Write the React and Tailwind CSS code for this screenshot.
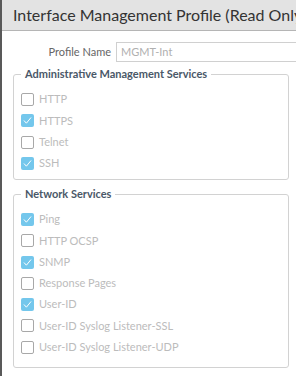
import React from 'react';

const adminServices = [
  { label: 'HTTP', checked: false },
  { label: 'HTTPS', checked: true },
  { label: 'Telnet', checked: false },
  { label: 'SSH', checked: true },
];

const networkServices = [
  { label: 'Ping', checked: true },
  { label: 'HTTP OCSP', checked: false },
  { label: 'SNMP', checked: true },
  { label: 'Response Pages', checked: false },
  { label: 'User-ID', checked: true },
  { label: 'User-ID Syslog Listener-SSL', checked: false },
  { label: 'User-ID Syslog Listener-UDP', checked: false },
];

function CheckRow({ label, checked }) {
  return (
    <div className="flex items-center h-[21.25px]">
      {checked ? (
        <span className="flex items-center justify-center w-[13px] h-[13px] rounded-[2px] bg-[#74c7ec]">
          <svg width="13" height="13" viewBox="0 0 13 13" fill="none">
            <path d="M3.2 6.8L5.4 9.2L9.8 3.8" stroke="white" strokeWidth="1" strokeLinecap="round" strokeLinejoin="round" />
          </svg>
        </span>
      ) : (
        <span className="w-[13px] h-[13px] rounded-[2px] border border-[#a8a8a8] bg-white" />
      )}
      <span className="ml-[5px] text-[11px] text-[#bcbcbc] whitespace-nowrap">{label}</span>
    </div>
  );
}

function Group({ title, items, className }) {
  return (
    <fieldset className={`ml-[11px] w-[276px] border border-[#d2d2d2] rounded-[3px] pl-[7px] ${className}`}>
      <legend className="px-[4px] text-[11px] font-bold text-[#4a5868] leading-[16px]">{title}</legend>
      <div className="pt-[7px]">
        {items.map((it) => (
          <CheckRow key={it.label} {...it} />
        ))}
      </div>
    </fieldset>
  );
}

export default function App() {
  return (
    <div className="w-[296px] h-[376px] overflow-hidden bg-white border-l-2 border-[#595959]" style={{ fontFamily: 'Lato, "Open Sans", sans-serif' }}>
      <div className="w-[330px]">
        <div className="h-[31px] bg-[#e3e3e3] border-b border-[#b5b5b5] flex items-center pl-[11px]">
          <span className="text-[16px] text-[#333] whitespace-nowrap">Interface Management Profile (Read Only)</span>
        </div>
        <div className="flex items-center mt-[11px] h-[20px]">
          <span className="w-[109px] text-right text-[11px] text-[#666]">Profile Name</span>
          <div className="ml-[5px] w-[210px] h-[20px] border border-[#d0d0d0] flex items-center pl-[4px] text-[11px] text-[#b0b0b0]">MGMT-Int</div>
        </div>
        <Group title="Administrative Management Services" items={adminServices} className="mt-[4px] pb-[5px]" />
        <Group title="Network Services" items={networkServices} className="mt-[6px] pb-[9px]" />
      </div>
    </div>
  );
}
